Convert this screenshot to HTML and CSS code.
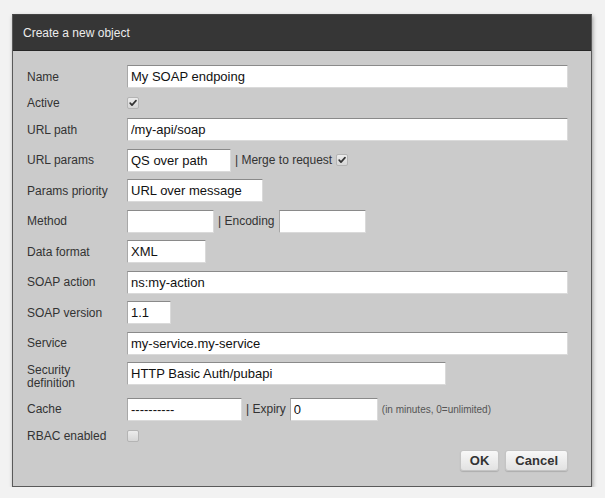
FILE: index.html
```html
<!DOCTYPE html>
<html>
<head>
<meta charset="utf-8">
<link rel="stylesheet" href="styles.css">
</head>
<body>
<div class="dialog">
  <div class="dialog-title">Create a new object</div>
  <form class="form">
    <label class="lbl">Name</label>
    <div class="fld"><input class="inp full" value="My SOAP endpoing"></div>

    <label class="lbl">Active</label>
    <div class="fld small"><span class="cb checked"><svg viewBox="0 0 12 12"><path d="M2.6 6.2 L4.8 8.6 L9.6 3.2" /></svg></span></div>

    <label class="lbl">URL path</label>
    <div class="fld"><input class="inp full" value="/my-api/soap"></div>

    <label class="lbl">URL params</label>
    <div class="fld"><input class="inp w-params" value="QS over path"><span class="sep">| Merge to request</span><span class="cb checked"><svg viewBox="0 0 12 12"><path d="M2.6 6.2 L4.8 8.6 L9.6 3.2" /></svg></span></div>

    <label class="lbl">Params priority</label>
    <div class="fld"><input class="inp w-prio" value="URL over message"></div>

    <label class="lbl">Method</label>
    <div class="fld"><input class="inp w-method" value=""><span class="sep">| Encoding</span><input class="inp w-method" value=""></div>

    <label class="lbl">Data format</label>
    <div class="fld"><input class="inp w-data" value="XML"></div>

    <label class="lbl">SOAP action</label>
    <div class="fld"><input class="inp full" value="ns:my-action"></div>

    <label class="lbl">SOAP version</label>
    <div class="fld"><input class="inp w-ver" value="1.1"></div>

    <label class="lbl">Service</label>
    <div class="fld"><input class="inp full" value="my-service.my-service"></div>

    <label class="lbl two">Security definition</label>
    <div class="fld top"><input class="inp w-sec" value="HTTP Basic Auth/pubapi"></div>

    <label class="lbl">Cache</label>
    <div class="fld"><input class="inp w-cache" value="----------"><span class="sep">| Expiry</span><input class="inp w-exp" value="0"><span class="hint">(in minutes, 0=unlimited)</span></div>

    <label class="lbl">RBAC enabled</label>
    <div class="fld small"><span class="cb"></span></div>

    <div class="actions">
      <button type="button" class="btn">OK</button>
      <button type="button" class="btn">Cancel</button>
    </div>
  </form>
</div>
</body>
</html>
```

FILE: styles.css
```css
html, body {
  margin: 0;
  padding: 0;
  background: #f2f2f2;
  font-family: "Liberation Sans", Arial, sans-serif;
}

.dialog {
  margin: 14px 0 0 12px;
  width: 578px;
  border: 1px solid #5a5a5a;
  border-top-color: #444;
  background: #cbcbcb;
  box-shadow: 1px 2px 4px rgba(0, 0, 0, 0.35);
}

.dialog-title {
  height: 35px;
  line-height: 36px;
  background: #363636;
  border-bottom: 1px solid #262626;
  color: #ececec;
  font-size: 12px;
  padding-left: 10px;
}

.form {
  display: grid;
  grid-template-columns: 100px 441px;
  row-gap: 7.5px;
  padding: 14px 23px 15px 14px;
  align-items: center;
}

.lbl {
  font-size: 12px;
  color: #333;
  line-height: 14px;
  align-self: center;
}

.lbl.two {
  align-self: start;
  width: 60px;
  line-height: 13px;
  padding-top: 2px;
}

.fld {
  display: flex;
  align-items: center;
  gap: 4px;
  height: 23px;
  font-size: 12px;
  color: #333;
  white-space: pre;
}

.fld.small {
  height: 15px;
}

.fld.top {
  align-self: start;
}

.inp {
  box-sizing: border-box;
  height: 23px;
  margin: 0;
  padding: 0 3px;
  border: 1px solid #dadada;
  border-top-color: #8a8a8a;
  border-left-color: #a8a8a8;
  background: #fff;
  font-family: "Liberation Sans", Arial, sans-serif;
  font-size: 13px;
  color: #111;
  outline: none;
}

.full { width: 441px; }
.w-params { width: 104px; }
.w-prio { width: 136px; }
.w-method { width: 87px; }
.w-data { width: 79px; }
.w-ver { width: 44px; }
.w-sec { width: 319px; }
.w-cache { width: 115px; }
.w-exp { width: 88px; }

.sep {
  font-size: 12px;
  color: #333;
}

.hint {
  font-size: 10px;
  color: #555;
}

.cb {
  box-sizing: border-box;
  display: inline-block;
  width: 12px;
  height: 12px;
  border: 1px solid #b4b4b4;
  border-radius: 2px;
  background: linear-gradient(#ececec, #d6d6d6);
}

.cb svg {
  display: block;
  width: 10px;
  height: 10px;
}

.cb path {
  fill: none;
  stroke: #333;
  stroke-width: 2;
  stroke-linecap: round;
  stroke-linejoin: round;
}

.actions {
  grid-column: 1 / -1;
  display: flex;
  justify-content: flex-end;
  gap: 6px;
  margin-top: -1px;
}

.btn {
  box-sizing: border-box;
  height: 21px;
  padding: 0 9px;
  margin: 0;
  border: 1px solid #c4c4c4;
  border-radius: 3px;
  background: linear-gradient(#f8f8f8, #e2e2e2);
  box-shadow: 0 1px 1px rgba(0, 0, 0, 0.15);
  font-family: "Liberation Sans", Arial, sans-serif;
  font-size: 13px;
  font-weight: bold;
  color: #333;
}
```
